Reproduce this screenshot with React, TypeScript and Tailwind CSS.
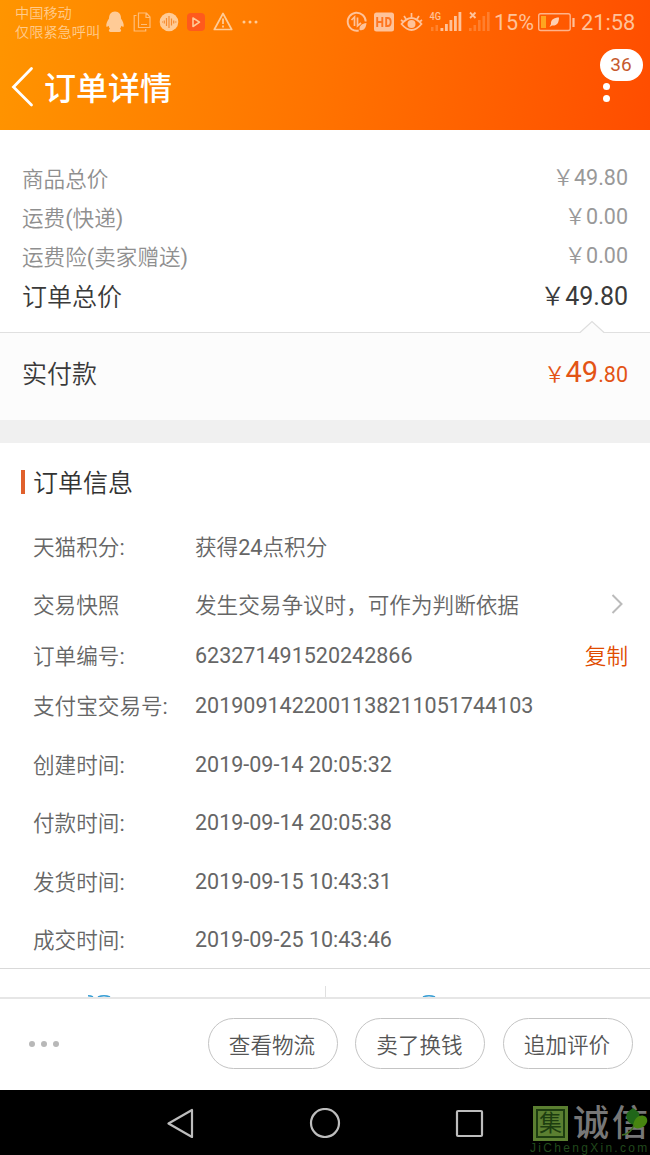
import clsx from 'clsx';

const PRICES = [
  { label: '商品总价', value: '49.80' },
  { label: '运费(快递)', value: '0.00' },
  { label: '运费险(卖家赠送)', value: '0.00' },
];

type InfoRow = {
  label: string;
  value: string;
  gap: string;
  action?: 'arrow' | 'copy';
};

const INFO: InfoRow[] = [
  { label: '天猫积分:', value: '获得24点积分', gap: '' },
  { label: '交易快照', value: '发生交易争议时，可作为判断依据', gap: 'mt-[18px]', action: 'arrow' },
  { label: '订单编号:', value: '623271491520242866', gap: 'mt-[11px]', action: 'copy' },
  { label: '支付宝交易号:', value: '2019091422001138211051744103', gap: 'mt-[10px]' },
  { label: '创建时间:', value: '2019-09-14 20:05:32', gap: 'mt-[19px]' },
  { label: '付款时间:', value: '2019-09-14 20:05:38', gap: 'mt-[18px]' },
  { label: '发货时间:', value: '2019-09-15 10:43:31', gap: 'mt-[19px]' },
  { label: '成交时间:', value: '2019-09-25 10:43:46', gap: 'mt-[18px]' },
];

const ACTIONS = ['查看物流', '卖了换钱', '追加评价'];

// Chinese runs use the lighter cut, latin runs stay regular
function Mixed({ text }: { text: string }) {
  return (
    <>
      {text.split(/([\x20-\x7e]+)/).map((part, i) => (
        <span key={i} className={i % 2 ? 'font-normal' : 'font-[350]'}>
          {part}
        </span>
      ))}
    </>
  );
}

function NotificationIcons() {
  return (
    <svg width="156" height="24" viewBox="104 10 156 24" fill="none" className="text-[#ffcb96]">
      {/* penguin */}
      <path
        d="M115 11.500c-4 0-6 3-6 7-1.800 2.500-3 5.500-2.700 8 .5.800 1.600.2 2.300-.8.200 1.200.8 2.200 1.400 3-2 1.500-1.300 3.300 1.500 3.300h7c2.800 0 3.500-1.800 1.500-3.300.6-.8 1.200-1.800 1.400-3 .7 1 1.800 1.600 2.300.8.300-2.500-.9-5.500-2.700-8 0-4-2-7-6-7Z"
        fill="currentColor"
      />
      {/* documents */}
      <g stroke="currentColor" strokeWidth="1.200" strokeOpacity=".8">
        <path d="M138.500 13h8l3.500 4v10.500h-11.500ZM146 13.500v4h4M141 24.500h6" />
        <path d="M136.500 15.500h-2.300v15.500h11.500v-2" />
      </g>
      {/* sound wave */}
      <circle cx="169" cy="22" r="9.300" fill="currentColor" />
      <path d="M162 22h1M164.300 20.500v3M166.500 18v8M169 16v12M171.500 18.500v7M173.700 20.500v3M175 22h1.500" stroke="#f68b31" strokeWidth="1.200" />
      {/* video */}
      <rect x="187" y="13" width="18" height="18" rx="4" fill="#ff5a1c" />
      <path d="M193 18v8.500l6.500-4.300Z" stroke="currentColor" strokeWidth="1.600" strokeLinejoin="round" />
      {/* warning */}
      <path d="M223 13.500 231.700 29.500H214.300Z" stroke="currentColor" strokeWidth="1.700" strokeLinejoin="round" />
      <path d="M223 18.500v5.500M223 25.500v2" stroke="currentColor" strokeWidth="1.800" />
      <g fill="currentColor">
        <circle cx="244" cy="22" r="1.500" />
        <circle cx="250" cy="22" r="1.500" />
        <circle cx="256" cy="22" r="1.500" />
      </g>
    </svg>
  );
}

function SystemIcons() {
  return (
    <svg width="146" height="28" viewBox="346 8 146 28" fill="none" className="text-[#ffc299]">
      {/* data saver */}
      <path d="M365.700 21.500a9 9 0 1 0-7 9" stroke="currentColor" strokeWidth="1.900" />
      <path d="m351.500 20 3-3v9M357.500 17.500v8.500l3.500-3" stroke="currentColor" strokeWidth="1.700" />
      <path d="M366.500 23c-4.500.5-7.500 2.500-7 7 4 1 6.500-1.500 7-7Z" fill="currentColor" />
      {/* HD */}
      <rect x="374" y="12.500" width="20" height="19" rx="2.500" fill="currentColor" />
      <path d="M377.200 17v10M382.300 17v10M377.200 22h5M386.200 18v8h1.500q3 0 3-4t-3-4Z" stroke="#ff751f" strokeWidth="1.900" />
      {/* eye */}
      <path d="M401.500 24q10-12 20 0-10 12-20 0Z" stroke="currentColor" strokeWidth="1.800" />
      <circle cx="411.500" cy="24" r="4" fill="currentColor" />
      <path d="M411.500 13v4M404 16l2 3M419 16l-2 3M401 20l2 1.500M422 20l-2 1.500" stroke="currentColor" strokeWidth="1.700" />
      {/* signal, first sim */}
      <text x="429.500" y="20" fontSize="11.500" fill="currentColor" className="font-medium" textLength="11.500" lengthAdjust="spacingAndGlyphs">
        4G
      </text>
      <g fill="currentColor">
        <path d="M431 27h2.500v4H431ZM435.500 25h2.500v6h-2.500Z" opacity=".3" />
        <path d="M440.500 28h2.800v3h-2.800ZM445 24h2.800v7H445ZM449.500 20h2.800v11h-2.800ZM454 16h2.800v15H454ZM458.500 12h2.800v19h-2.800Z" />
      </g>
      {/* signal, second sim */}
      <path d="m470 12.500 5.500 5.500M475.500 12.500 470 18" stroke="currentColor" strokeWidth="1.800" />
      <path d="M469 28h2.600v3H469ZM473.500 25h2.600v6h-2.600ZM478 20h2.600v11H478ZM482.500 16h2.600v15h-2.600ZM487 12h2.600v19H487Z" fill="currentColor" opacity=".3" />
    </svg>
  );
}

function BatteryIcon() {
  return (
    <svg width="38" height="20" viewBox="538 12 38 20" fill="none">
      <rect x="539.700" y="13.700" width="31.500" height="16.800" rx="2" stroke="#ffb38a" strokeWidth="1.400" />
      <rect x="542" y="16" width="5" height="12" fill="#ffa51f" />
      <path d="M560 17.500c-5 0-8.500 2.200-8 6.500l-1.500 3 2.500-1.500c5 .5 7-2.700 7-8Z" fill="#ffd0b3" />
      <path d="M574.500 18v9" stroke="#ffc299" strokeWidth="2.200" />
    </svg>
  );
}

function Header() {
  return (
    <header className="h-[130px] bg-[linear-gradient(100deg,#ff9500_0%,#ff7300_50%,#ff4d00_100%)]">
      <div className="flex h-[44px] items-center pl-[15px]">
        <div className="mt-[2px] w-[89px] whitespace-nowrap text-[14.200px] font-[350] leading-[19px] text-[#ffcb8c]">
          <div>中国移动</div>
          <div>仅限紧急呼叫</div>
        </div>
        <NotificationIcons />
        <div className="ml-[86px] flex items-center">
          <SystemIcons />
          <span className="ml-[2px] mt-[2px] w-[43px] whitespace-nowrap text-[21.500px] leading-none text-[#ffc299]">15%</span>
          <BatteryIcon />
          <span className="ml-[6px] mt-[2px] text-[21.800px] leading-none text-[#ffc299]">21:58</span>
        </div>
      </div>

      <div className="flex h-[86px] items-center justify-between pl-[10px] pr-[6px]">
        <div className="flex items-center text-white">
          <svg className="mb-[2px]" width="26" height="42" viewBox="0 0 26 42" fill="none">
            <path d="M21.500 3.500 3.500 22l18 18" stroke="currentColor" strokeWidth="2.800" strokeLinecap="round" />
          </svg>
          <h1 className="ml-[8px] mt-[4px] text-[32px] font-medium leading-[40px]">订单详情</h1>
        </div>
        <div className="relative h-[76px] w-[44px]">
          <div className="absolute left-[3px] top-[34px] flex flex-col gap-[5px]">
            <i className="size-[7px] rounded-full bg-white" />
            <i className="size-[7px] rounded-full bg-white" />
          </div>
          <span className="absolute left-0 top-0 flex h-[32px] w-[43px] items-center justify-center rounded-full bg-white pr-px pt-px text-[19px] text-[#c65a2d]">
            36
          </span>
        </div>
      </div>
    </header>
  );
}

function Summary() {
  return (
    <section className="pt-[29px]">
      {PRICES.map((p) => (
        <div key={p.label} className="flex h-[39px] items-center justify-between px-[22px] text-[21.600px] leading-[30px] text-[#8f8f8f]">
          <span className="pt-[2px]">
            <Mixed text={p.label} />
          </span>
          <span className="pb-[2px] text-[21.500px] text-[#999]">
            <span className="font-[350]">￥</span>
            {p.value}
          </span>
        </div>
      ))}
      <div className="flex h-[42px] items-center justify-between px-[22px] text-[25px] leading-[36px] text-[#3a3a3a]">
        <span className="pt-[2px] font-[350]">订单总价</span>
        <span className="pb-px">
          <span className="font-[350]">￥</span>49.80
        </span>
      </div>

      <div className="relative mt-[14px] flex h-[88px] items-center justify-between border-t border-[#e0e0e0] bg-[#fcfcfc] px-[22px] pb-[5px]">
        <svg className="absolute right-[44px] top-[-13px]" width="28" height="14" viewBox="0 0 28 14">
          <path d="M2 13 14 1.500 26 13v1H2Z" fill="#fcfcfc" />
          <path d="M2 12.500 14 1.500l12 11" fill="none" stroke="#dedede" strokeWidth="1.200" />
        </svg>
        <span className="pt-[2px] text-[25px] font-[350] leading-[36px] text-[#3a3a3a]">实付款</span>
        <span className="pb-px text-[21.500px] leading-[34px] text-[#e35415]">
          <span className="font-[350]">￥</span>
          <span className="text-[29px]">49</span>.80
        </span>
      </div>
    </section>
  );
}

function OrderInfo() {
  return (
    <section className="border-t-[23px] border-[#f0f0f0] pt-[26px]">
      <div className="flex h-[26px] items-center pl-[21px]">
        <span className="h-[24px] w-[4px] bg-[#e0602c]" />
        <h2 className="ml-[8px] pt-[3px] text-[25px] font-[350] leading-[26px] text-[#333]">订单信息</h2>
      </div>
      <div className="mt-[32px] pl-[33px] pr-[22px] text-[21.600px] leading-[38px] text-[#666]">
        {INFO.map((row) => (
          <div key={row.label} className={clsx('flex h-[40px] items-center', row.gap)}>
            <span className="w-[162px] whitespace-nowrap pt-[2px]">
              <Mixed text={row.label} />
            </span>
            <span
              className={clsx('flex-1 whitespace-nowrap', /^[\d\s:-]+$/.test(row.value) ? 'text-[21.500px]' : 'pt-[2px]')}
            >
              <Mixed text={row.value} />
            </span>
            {row.action === 'arrow' && (
              <svg className="mb-[2px] mr-[4.500px]" width="14" height="22" viewBox="0 0 14 22" fill="none">
                <path d="m2.500 2 9 9-9 9" stroke="#bbb" strokeWidth="2" />
              </svg>
            )}
            {row.action === 'copy' && <span className="pt-[2px] font-[350] text-[#e04c00]">复制</span>}
          </div>
        ))}
      </div>
    </section>
  );
}

function ContactStrip() {
  return (
    <div className="mt-[8px] flex h-[29px] border-t border-[#d9d9d9]">
      <div className="flex w-[325px] items-end pl-[87px]">
        <svg width="26" height="3" viewBox="0 0 26 3" fill="none">
          <path d="M1 1.800q3 0 5 1" stroke="#3a9fd5" strokeWidth="1.500" />
          <path d="M11 3q6-2.500 12 0" stroke="#3a9fd5" strokeWidth="1.600" />
        </svg>
      </div>
      <div className="mt-[17px] w-px bg-[#e0e0e0]" />
      <div className="flex flex-1 items-end pl-[95px]">
        <svg width="16" height="3" viewBox="0 0 16 3" fill="none">
          <path d="M2 3q6-2.500 12 0" stroke="#3a9fd5" strokeWidth="1.600" />
        </svg>
      </div>
    </div>
  );
}

function ActionBar() {
  return (
    <div className="flex h-[93px] items-center justify-between border-t-2 border-[#e6e6e6] pb-[2px] pl-[29px] pr-[17.500px]">
      <div className="flex gap-[6px]">
        <i className="size-[6px] rounded-full bg-[#b8b8b8]" />
        <i className="size-[6px] rounded-full bg-[#b8b8b8]" />
        <i className="size-[6px] rounded-full bg-[#b8b8b8]" />
      </div>
      <div className="flex gap-[17.500px]">
        {ACTIONS.map((text) => (
          <button
            key={text}
            type="button"
            className="h-[51px] w-[130px] rounded-full border border-[#c4c4c4] pr-px pt-[4px] text-[21.600px] font-[350] leading-[30px] text-[#555]"
          >
            {text}
          </button>
        ))}
      </div>
    </div>
  );
}

function Watermark() {
  return (
    <div className="absolute left-[530px] top-[15px] w-[120px]">
      <div className="flex h-[37px] items-center">
        <div className="ml-[3px] flex size-[35px] shrink-0 items-center justify-center bg-[#5b7f31]">
          <div className="flex size-[29px] items-center justify-center border-2 border-[#1d3d10] text-[23px] leading-[23px] text-[#1d3d10]">集</div>
        </div>
        <div className="ml-[5px] flex gap-[3px] text-[36px] font-medium leading-[36px] text-[#777]">
          <span>诚</span>
          <span>信</span>
        </div>
      </div>
      <div className="whitespace-nowrap font-['Liberation_Sans'] text-[12px] leading-[12px] tracking-[2.300px] text-[#20491c]">JiChengXin.com</div>
      <svg className="absolute left-[88px] top-0" width="32" height="36" viewBox="0 0 32 36">
        <path d="M16 20C8 18 6 9 11 6l4-3 4 3c5 3 2 11-3 14Z" fill="#206619" />
        <path d="M15 21c1-9 8-13 13-9 3 4 0 8-3 10-4 2-8 2-10-1Z" fill="#47850f" />
        <path d="M16 20c-2 6-5 9-12 10" fill="none" stroke="#416f21" strokeWidth="1.500" />
      </svg>
    </div>
  );
}

function NavBar() {
  return (
    <nav className="relative flex h-[65px] justify-center bg-black pt-[18px]">
      <svg width="318" height="30" viewBox="166 1108 318 30" fill="none" stroke="#bdbdbd" strokeWidth="2.200" strokeLinejoin="round">
        <path d="M192 1110v27l-23.500-13.500Z" />
        <circle cx="325" cy="1123" r="14" />
        <rect x="457" y="1111" width="25" height="25" rx="1" />
      </svg>
      <Watermark />
    </nav>
  );
}

export default function App() {
  return (
    <div className="h-[1155px] w-[650px] overflow-hidden bg-white font-[Roboto,'Noto_Sans_CJK_SC',sans-serif]">
      <Header />
      <Summary />
      <OrderInfo />
      <ContactStrip />
      <ActionBar />
      <NavBar />
    </div>
  );
}
